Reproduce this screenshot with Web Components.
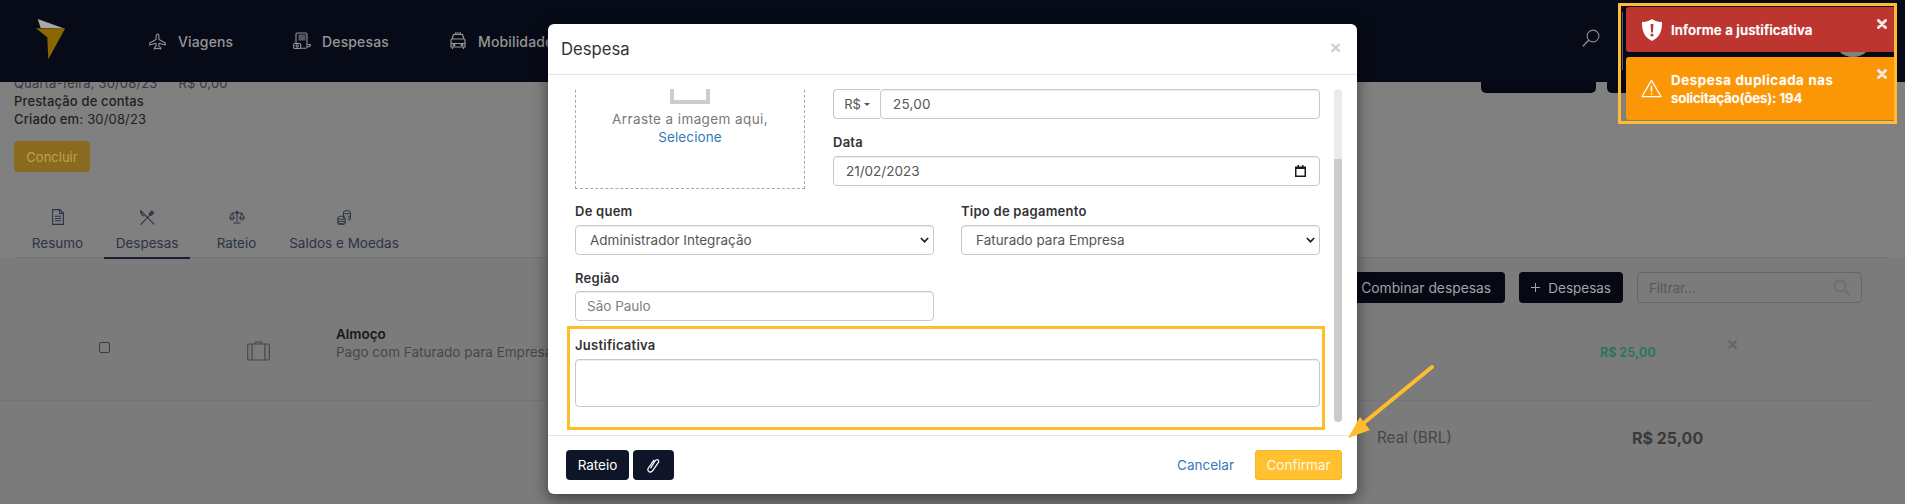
<!DOCTYPE html>
<html lang="pt-BR"><head><meta charset="utf-8"><title>Despesa</title>
<style>
html,body{margin:0;padding:0;height:504px;overflow:hidden;background:#808080}
body{font-family:Inter,"Noto Sans",sans-serif;font-size:13px;display:flex;flex-direction:column;width:1905px;position:relative}
</style></head><body>
<top-bar></top-bar>
<page-main></page-main>
<expense-modal></expense-modal>
<toast-stack></toast-stack>
<note-layer></note-layer>
<script>
const I={
plane:'<svg width="17" height="17" viewBox="0 0 24 24" fill="none" stroke="currentColor" stroke-width="1.5" stroke-linejoin="round"><path d="M12 1.5c1.1 0 2 1.7 2 3.6v4L23 14v3l-9-2.4v4.3l2.6 2v1.8L12 21.6l-4.6 1.1v-1.8l2.6-2v-4.3L1 17v-3l9-4.900v-4C10 3.200 10.900 1.500 12 1.500z"/></svg>',
pos:'<svg width="18" height="18" viewBox="0 0 18 18" fill="none" stroke="currentColor" stroke-width="1.100"><path d="M3 11V2.200C3 1.500 3.500 1 4.200 1h8.600c.7 0 1.200.5 1.200 1.200V15c0 .7-.5 1.200-1.200 1.200H8"/><rect x="6" y="3" width="6" height="5" fill="currentColor" opacity=".55"/><rect x=".7" y="11.500" width="7" height="5" rx="1"/><circle cx="4.200" cy="14" r="1.200"/><path d="M14.500 12.500h2.800c0 1.500-1 2.500-2.800 2.500"/></svg>',
car:'<svg width="16" height="18" viewBox="0 0 16 18" fill="none" stroke="currentColor" stroke-width="1.200"><path d="M5.500 2.500V1h5v1.500M3.500 2.500h9l1.500 4.500H2zM1 8.500C1 7.500 1.500 7 2 7h12c.5 0 1 .5 1 1.500V15H1zM2.500 15v2M13.500 15v2M1 11.500h14"/><circle cx="4" cy="13" r=".8" fill="currentColor"/><circle cx="12" cy="13" r=".8" fill="currentColor"/></svg>',
search:'<svg width="18" height="18" viewBox="0 0 18 18" fill="none" stroke="#8a8a8a" stroke-width="1.100"><circle cx="11" cy="7" r="5.900"/><path d="M6.700 11.300 .8 17.200" stroke-width="1.500"/></svg>',
doc:'<svg width="12" height="16" viewBox="0 0 12 16" fill="none" stroke="currentColor" stroke-width="1.100"><path d="M.6.600h7.300l3.500 3.500v11.300H.6z"/><path d="M7.600.6v3.800h3.800M2.800 7.200h6.400M2.800 9.500h6.400M2.800 11.800h6.400"/></svg>',
cutlery:'<svg width="15" height="15" viewBox="0 0 15 15" fill="none" stroke="currentColor" stroke-width="1.100" stroke-linecap="round"><path d="M.7.700 14 14.200M.7.700C.4 3 1.800 4.800 4 6"/><path d="M.8 14.300 10.200 4.800M9.200 3.700 12 .8M10 4.600l2.900-2.900M11 5.500l2.900-2.900M9.200 3.700c-.4.500-.2.900 1.800 1.800"/></svg>',
scale:'<svg width="16" height="14" viewBox="0 0 16 14" fill="none" stroke="currentColor" stroke-width="1"><path d="M8 .5v11.500M4.500 13h7M3 3h10M3 3 .7 8h4.600zM13 3l-2.300 5h4.600zM.7 8c.2 2.500 4.400 2.500 4.600 0M10.700 8c.2 2.500 4.400 2.500 4.600 0"/><circle cx="8" cy="2.300" r="1"/></svg>',
coins:'<svg width="14" height="15" viewBox="0 0 14 15" fill="none" stroke="currentColor" stroke-width="1"><ellipse cx="10" cy="2.300" rx="3.500" ry="1.600"/><path d="M6.500 2.300v6M13.500 2.300v6.400c0 .7-.7 1.200-2 1.400M13.500 5c0 .8-1 1.400-2.500 1.500M13.500 7.500c0 .7-1 1.300-2.500 1.400M6.500 5c0 .5.400.9 1 1.100"/><ellipse cx="4.500" cy="7.800" rx="3.700" ry="1.600"/><path d="M.8 7.800v5.400c0 .9 1.700 1.500 3.700 1.500s3.700-.6 3.700-1.500V7.800M.8 10c0 .9 1.700 1.500 3.700 1.500s3.700-.6 3.700-1.500M.8 12c0 .9 1.700 1.500 3.700 1.500S8.200 12.900 8.200 12"/></svg>',
brief:'<svg width="23" height="20" viewBox="0 0 23 20" fill="none" stroke="#474747" stroke-width="1.200"><rect x=".7" y="3" width="21.600" height="16" rx="1.500"/><path d="M5 3v16M18 3v16M8.500 3V1h6v2"/></svg>',
x:(s,c,w=2.6)=>`<svg width="${s}" height="${s}" viewBox="0 0 10 10" fill="none" stroke="${c}" stroke-width="${w}" stroke-linecap="round"><path d="M1.500 1.500l7 7M8.500 1.500l-7 7"/></svg>`,
shield:'<svg width="20" height="22" viewBox="0 0 20 22"><path fill="#fff" d="M10 0c2.500 2 6 3 10 3 .2 9-2.500 15.500-10 19C2.500 18.500-.2 12 0 3c4 0 7.500-1 10-3z"/><path fill="#bc362f" d="M8.600 5h2.800l-.5 8.500H9.100z"/><circle cx="10" cy="16" r="1.600" fill="#bc362f"/></svg>',
warn:'<svg width="22" height="19" viewBox="0 0 22 19" fill="none" stroke="#fff" stroke-width="1.200" stroke-linejoin="round"><path d="M11 1 21 18H1z"/><path d="M11 6.500v6.500M11 14.500v1.600" stroke-width="1.500"/></svg>',
clip:'<svg width="13" height="15" viewBox="0 0 13 15" fill="none" stroke="#fff" stroke-width="1.250" stroke-linecap="round" stroke-linejoin="round"><path d="M3.700 9.800 8.300 2.700c.5-.9 1.700-1.300 2.500-.8.900.5 1.100 1.600.6 2.500L5.700 12.600c-.9 1.300-2.500 1.700-3.700 1-1.200-.8-1.400-2.300-.6-3.600L6.700 2.300"/></svg>',
cal:'<svg width="11" height="12" viewBox="0 0 11 12"><path fill="#1a1a1a" d="M0 1.500h11V12H0zM1.500 4v6.500h8V4zM2.500 0H4v2H2.500zM7 0h1.500v2H7z"/></svg>',
chev:'<svg width="9" height="6" viewBox="0 0 9 6" fill="none" stroke="#222" stroke-width="1.700"><path d="M.8 1l3.700 3.700L8.200 1"/></svg>',
mag:'<svg width="18" height="17" viewBox="0 0 18 17" fill="none" stroke="#707070" stroke-width="2"><circle cx="7" cy="7" r="5.700"/><path d="M11.500 11.300 16.500 16" stroke-width="2.600"/></svg>'
};
const def=(name,css,html)=>customElements.define(name,class extends HTMLElement{
  connectedCallback(){ if(this.shadowRoot) return;
    this.attachShadow({mode:'open'}).innerHTML=`<style>${css}</style>`+html(this);}
});
const A=(e,n,d='')=>e.getAttribute(n)??d;

def('nav-item',`:host{display:flex;align-items:center;gap:var(--g,12px);color:#969696;font-weight:500;font-size:14px;letter-spacing:.15px;white-space:nowrap}svg{display:block}`,
 e=>I[A(e,'icon')]+'<slot></slot>');

def('top-bar',`:host{flex:none;display:flex;align-items:center;height:82px;background:#070b17;position:relative}
 .logo{display:block;margin-left:36px;align-self:flex-start;margin-top:19px}
 nav{display:flex;margin-left:84px;align-items:center}
 .r{margin-left:auto;display:flex;align-items:center;padding-right:32px}
 .l{width:1px;height:58px;background:#5c5f66;margin-left:22px}
 .a{width:40px;height:40px;border-radius:50%;background:#808080;margin-left:210px;margin-top:-9px}
 .s{margin-top:-3px;display:block}`,
 ()=>`<svg class="logo" width="29" height="41" viewBox="36 19 29 41"><path fill="#a9a9a9" d="M37.700 19 65 28.700 40.700 28z"/><path fill="#8a6700" d="M36 28.300 65 28.700 48.300 59.300 47.300 37.300z"/></svg>
 <nav><nav-item icon="plane" style="width:144px;--g:12px">Viagens</nav-item><nav-item icon="pos" style="width:157px;--g:11px">Despesas</nav-item><nav-item icon="car" style="--g:12px">Mobilidade</nav-item></nav>
 <div class="r"><span class="s">${I.search}</span><div class="l"></div><div class="a"></div></div>`);

def('tab-item',`:host{display:flex;flex-direction:column;align-items:center;box-sizing:border-box;height:60px;padding-top:10px;color:#2d3346;font-size:13.500px;white-space:nowrap}
 :host([active]){border-bottom:2px solid #1a1f33}
 .i{height:16px;display:flex;align-items:center;justify-content:center;margin-bottom:9px}
 slot{display:block;line-height:18px}`,
 e=>`<div class="i">${I[A(e,'icon')]}</div><slot></slot>`);

def('dark-btn',`:host{display:flex;align-items:center;justify-content:flex-end;box-sizing:border-box;height:31px;background:#060914;color:#a3a3a3;border-radius:4px;font-size:var(--fs,14px);white-space:nowrap;padding:0 var(--p,12px);gap:8px}`,
 e=>(e.hasAttribute('plus')?'<svg width="9" height="9" viewBox="0 0 9 9" stroke="#a3a3a3" stroke-width="1"><path d="M4.500 0v9M0 4.500h9"/></svg>':'')+'<slot></slot>');

def('page-main',`:host{flex:1;display:block;overflow:hidden;background:#808080;color:#333;min-height:0;isolation:isolate}
 .in{margin-top:-8px;display:flex;flex-direction:column}
 .top{display:flex;justify-content:space-between;padding:0 0 0 14px;height:54px}
 .sum{line-height:18px;font-size:13px;white-space:nowrap;color:#1f1f1f;letter-spacing:.15px}
 .sum b{font-weight:500}
 .sum .r{color:#3a3a3a;display:flex;gap:21px}
 .top .bs{display:flex;gap:11px;padding-right:188px}
 .bs i{display:block;height:19px;background:#060914;border-radius:0 0 5px 5px}
 .cc{margin:13px 0 0 14px;width:76px;height:31px;border-radius:4px;background:#896a1f;color:#c2a24b;font-size:13px;display:flex;align-items:center;justify-content:center}
 .tabs{display:flex;gap:8px;margin:27px 16px 0 14px;padding-left:5px;height:58px;position:relative;z-index:1;border-bottom:1px solid #757575}
 .panel{background:#7b7b7b;height:260px;display:flex;flex-direction:column}
 .tb{display:flex;justify-content:flex-end;gap:14px;padding:14px 43px 0 0}
 .f{box-sizing:border-box;width:225px;height:31px;border:1px solid #666;border-radius:4px;display:flex;align-items:center;justify-content:space-between;padding:0 10px 0 11px;color:#575757;font-size:13.200px}
 .row{display:grid;grid-template-columns:148px 89px 1264px 128px 20px;padding-left:99px;height:98px;margin-right:30px;border-bottom:1px solid #747474;box-sizing:border-box;align-items:start}
 .cb{box-sizing:border-box;width:11px;height:11px;border:1px solid #3b3b3b;border-radius:2px;margin-top:39px}
 .ic{margin-top:38px}.ic svg{display:block}
 .tx{margin-top:22px;line-height:18px;font-size:13.500px;color:#474747;white-space:nowrap}
 .tx b{display:block;color:#191919;font-weight:600}
 .am{margin-top:41px;line-height:18px;font-weight:700;color:#2d7757;font-size:12.500px}
 .xx{margin-top:37px}.xx svg{display:block}
 .tot{display:grid;grid-template-columns:255px auto;padding:25px 0 0 1377px;line-height:24px;font-size:15.300px;color:#474747}
 .tot b{font-size:16px;color:#3a3a3a;font-weight:700}`,
 ()=>`<div class="in">
 <div class="top"><div class="sum"><div class="r"><span>Quarta-feira, 30/08/23</span><span>R$ 0,00</span></div><div><b>Prestação de contas</b></div><div><b>Criado em:</b> 30/08/23</div></div>
 <div class="bs"><i style="width:115px"></i><i style="width:110px"></i></div></div>
 <div class="cc">Concluir</div>
 <div class="tabs"><tab-item icon="doc" style="width:77px">Resumo</tab-item><tab-item icon="cutlery" active style="width:86px">Despesas</tab-item><tab-item icon="scale" style="width:77px">Rateio</tab-item><tab-item icon="coins" style="width:122px">Saldos e Moedas</tab-item></div>
 <div class="panel">
  <div class="tb"><dark-btn style="width:160px;--p:14px;--fs:13.800px">Combinar despesas</dark-btn><dark-btn plus style="width:104px;--fs:13.500px">Despesas</dark-btn><div class="f"><span>Filtrar...</span>${I.mag}</div></div>
  <div class="row"><div class="cb"></div><div class="ic">${I.brief}</div><div class="tx"><b>Almoço</b>Pago com Faturado para Empresa</div><div class="am">R$ 25,00</div><div class="xx">${I.x(9,'#666')}</div></div>
  <div class="tot"><span>Real (BRL)</span><b>R$ 25,00</b></div>
 </div></div>`);

def('form-field',`:host{display:block;min-width:0}
 label{display:block;font-weight:600;line-height:18px;color:#333;font-size:13px;letter-spacing:.25px;margin-bottom:var(--lg,5px)}`,
 e=>`<label>${A(e,'label')}</label><slot></slot>`);

def('text-box',`:host{display:flex;align-items:center;justify-content:space-between;box-sizing:border-box;height:var(--h,30px);border:1px solid #c8c8c8;border-radius:4px;background:#fff;padding:0 var(--pr,12px) 0 var(--pl,12px);color:var(--c,#555);font-size:13.500px;white-space:nowrap;box-shadow:inset 0 1px 1px rgba(0,0,0,.075)}`,
 e=>`<slot></slot>`+(e.getAttribute('end')?I[A(e,'end')]:''));

def('expense-modal',`:host{position:absolute;z-index:2;left:548px;top:24px;width:809px;height:470px;background:#fff;border-radius:6px;box-shadow:0 5px 15px rgba(0,0,0,.5);display:flex;flex-direction:column;overflow:hidden;color:#333}
 header{flex:none;height:50px;border-bottom:1px solid #e5e5e5;display:flex;align-items:center;padding:0 16px 0 13px}
 h4{margin:0;font-weight:400;font-size:16.700px;color:#333}
 .c{margin-left:auto;color:#cdcdcd;font:700 19px "Liberation Sans",sans-serif;margin-top:-3px}
 .b{flex:1;display:flex;min-height:0;padding-left:27px;box-sizing:border-box}
 .ct{width:745px;margin-top:14px;overflow:hidden;display:flex;flex-direction:column}
 .r1{display:grid;grid-template-columns:230px 487px;gap:28px;height:100px;flex:none}
 .dz{box-sizing:border-box;height:160px;margin-top:-60px;border:1px dashed #a9a9a9;display:flex;flex-direction:column;align-items:center;padding-top:44px;color:#777;font-size:13.500px;line-height:18px}
 .dz span{letter-spacing:.4px}.dz a{letter-spacing:.1px}
 .tray{box-sizing:border-box;width:40px;height:30px;border:4px solid #ccc;border-top:0;margin-bottom:6px}
 .dz a{color:#337ab7}
 .ig{display:flex}
 .add{box-sizing:border-box;width:47px;height:30px;border:1px solid #c8c8c8;border-right:0;border-radius:4px 0 0 4px;display:flex;align-items:center;justify-content:center;gap:3px;color:#555;font-size:13px}
 .add i{display:block;width:0;height:0;border:3px solid transparent;border-top:3.500px solid #555;border-bottom:0}
 .ig text-box{flex:1;border-radius:4px;letter-spacing:.2px}
 .r2{display:grid;grid-template-columns:359px 359px;gap:27px;margin-top:13px;flex:none}
 .r3{margin-top:14px;width:359px;--lg:4px;flex:none}
 .r4{margin-top:15px;flex:none}
 .sb{width:8px;margin:14px 0 13px 14px;background:#ebebeb;border-radius:4px;position:relative;display:flex;flex-direction:column;justify-content:flex-end}
 .sb i{display:block;height:263px;background:#cbcbcb;border-radius:0 0 4px 4px}
 footer{flex:none;height:59px;box-sizing:border-box;border-top:1px solid #e5e5e5;display:flex;align-items:flex-start;padding:14px 15px 0 18px;font-size:13.500px}
 .btn{height:30px;box-sizing:border-box;background:#0f1528;color:#fff;border-radius:4px;display:flex;align-items:center;justify-content:center}
 .lnk{margin-left:auto;color:#337ab7;line-height:30px}
 .ok{margin-left:21px;width:87px;height:30px;background:#ffc12f;border-radius:4px;color:#fff7e0;display:flex;align-items:center;justify-content:center;box-shadow:inset 0 0 0 1px #f5b81f}`,
 ()=>`<header><h4>Despesa</h4><span class="c">×</span></header>
 <div class="b"><div class="ct">
  <div class="r1"><div class="dz"><div class="tray"></div><span>Arraste a imagem aqui,</span><a>Selecione</a></div>
   <div><div class="ig"><div class="add">R$<i></i></div><text-box>25,00</text-box></div>
   <form-field label="Data" style="margin-top:14px"><text-box end="cal" style="--pr:13px">21/02/2023</text-box></form-field></div></div>
  <div class="r2"><form-field label="De quem"><text-box end="chev" style="--pl:14px;--pr:4px">Administrador Integração</text-box></form-field>
   <form-field label="Tipo de pagamento"><text-box end="chev" style="--pl:14px;--pr:4px">Faturado para Empresa</text-box></form-field></div>
  <form-field class="r3" label="Região"><text-box style="--pl:11px;--c:#808080">São Paulo</text-box></form-field>
  <form-field class="r4" label="Justificativa"><text-box style="--h:48px"></text-box></form-field>
 </div><div class="sb"><i></i></div></div>
 <footer><div class="btn" style="width:63px">Rateio</div><div class="btn" style="width:41px;margin-left:4px">${I.clip}</div><span class="lnk">Cancelar</span><div class="ok">Confirmar</div></footer>`);

def('toast-card',`:host{display:flex;position:relative;box-sizing:border-box;padding-left:15px;gap:9px;align-items:center;color:#fff;font-weight:600;font-size:13.300px;line-height:18px;border-radius:3px 0 0 3px;background:var(--bg);text-shadow:0 0 1px rgba(255,255,255,.6)}
 .i{width:21px;display:flex;justify-content:center}.i svg{display:block}
 .x{position:absolute;right:7px;top:var(--xt);display:block}.x svg{display:block}`,
 e=>`<span class="i">${I[A(e,'icon')]}</span><div><slot></slot></div><span class="x">${I.x(10,'#f4e9e4',3)}</span>`);

def('toast-stack',`:host{position:absolute;z-index:3;left:1626px;top:7px;width:268px;display:flex;flex-direction:column;gap:5px}`,
 ()=>`<toast-card icon="shield" style="--bg:#bc362f;height:45px;--xt:12px;letter-spacing:.1px">Informe a justificativa</toast-card>
 <toast-card icon="warn" style="--bg:#fb9707;height:63px;--xt:12px"><span style="letter-spacing:.65px">Despesa duplicada nas</span><br><span style="letter-spacing:-.1px">solicitação(ões): 194</span></toast-card>`);

def('note-layer',`:host{position:absolute;z-index:4;inset:0;display:block;pointer-events:none}
 i{position:absolute;box-sizing:border-box;border:3px solid #ffbc2f}
 svg{position:absolute;left:1340px;top:360px}`,
 ()=>`<i style="left:567px;top:326px;width:758px;height:104px"></i><i style="left:1618px;top:3px;width:279px;height:121px"></i>
 <svg width="100" height="85" viewBox="1340 360 100 85"><path d="M1432 367 1360 426" stroke="#ffbc2f" stroke-width="4" stroke-linecap="round" fill="none"/><path d="M1348 438 1360 417 1370 430z" fill="#ffbc2f"/></svg>`);
</script>
</body></html>
